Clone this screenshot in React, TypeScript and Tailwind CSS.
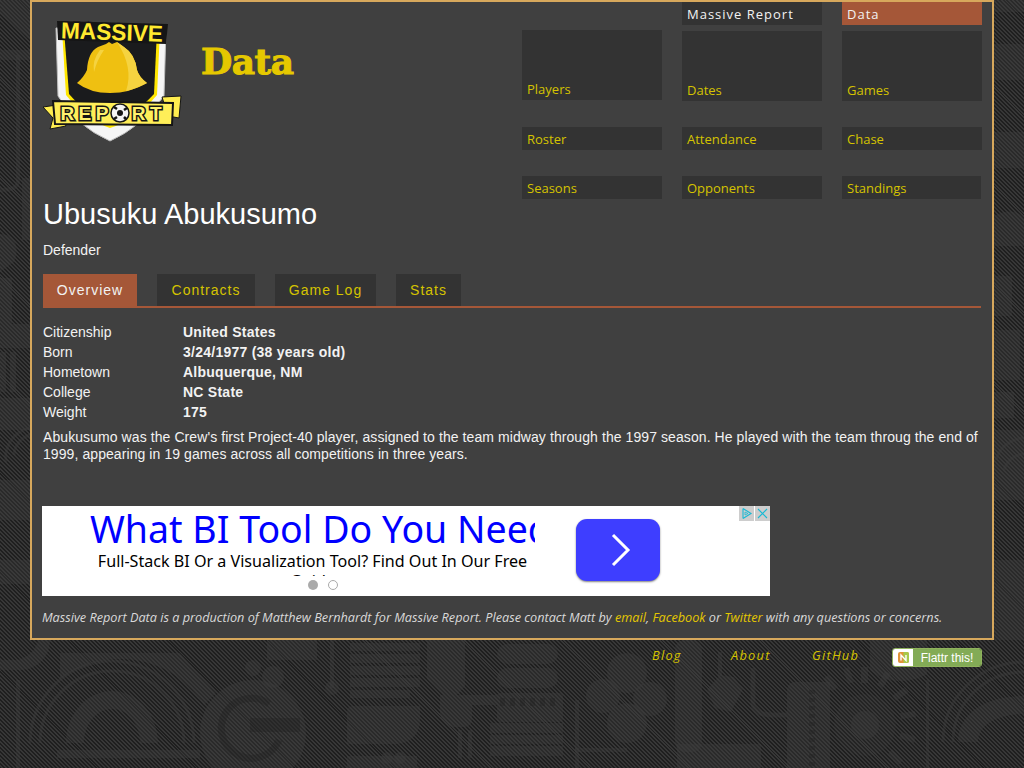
import React from "react";

const navColumns = [
  [
    { label: "Players", box: "h-[70px] mt-[28px]" },
    { label: "Roster", box: "h-[23px] mt-[27px]" },
    { label: "Seasons", box: "h-[23px] mt-[26px]" },
  ],
  [
    { label: "Massive Report", box: "h-[23px] tracking-[1px] text-[#f2f2f2]" },
    { label: "Dates", box: "h-[70px] mt-[6px]" },
    { label: "Attendance", box: "h-[23px] mt-[26px]" },
    { label: "Opponents", box: "h-[23px] mt-[26px]" },
  ],
  [
    { label: "Data", box: "h-[23px] tracking-[1px] text-[#f2f2f2] bg-[#a55738]" },
    { label: "Games", box: "h-[70px] mt-[6px]" },
    { label: "Chase", box: "h-[23px] mt-[26px]" },
    { label: "Standings", box: "h-[23px] mt-[26px] w-[139px]" },
  ],
];

const tabs = [
  { label: "Overview", width: "w-[94px]" },
  { label: "Contracts", width: "w-[98px]" },
  { label: "Game Log", width: "w-[101px]" },
  { label: "Stats", width: "w-[65px]" },
];

const facts = [
  ["Citizenship", "United States"],
  ["Born", "3/24/1977 (38 years old)"],
  ["Hometown", "Albuquerque, NM"],
  ["College", "NC State"],
  ["Weight", "175"],
];

// machinery pattern printed over the stripes
function Backdrop() {
  return (
    <svg className="absolute inset-0 w-[1024px] h-[768px]" viewBox="0 0 1024 768" fill="none">
      <g fill="#3c3c3c" fillOpacity="0.38">
        {/* left margin */}
        <path d="M0 0h30v40L0 14zM0 50h30v10H0zM22 178h8v62h-8zM0 234c16 0 20 14 14 28L0 272zM0 278h12v46H0zM0 324h30v24H0zM0 398h30v32H0zM0 480h30v40H0zM0 560h30v24H0z" />
        <rect x="0" y="352" width="6" height="40" />
        <rect x="10" y="352" width="6" height="40" />
        {/* right margin */}
        <path d="M994 0h30v12h-30zM994 44h30v36h-30zM994 132h30v36h-30zM994 216c14-8 26-4 30 2v28h-30zM994 276h18v40h-18zM994 330h26v50h-26zM994 392h20v26h-20zM994 430h30v70h-30zM994 560h30v80h-30z" />
        {/* bottom left */}
        <path d="M50 640c0 20-16 30-30 30H0v-10h14c10 0 22-8 24-20z" />
        <path d="M60 653h120l36 40-12 12c-20-30-50-46-84-46-20 0-40 6-60 20z" />
        <path d="M66 743c0-28 20-52 46-52s46 24 46 52h-18c0-18-12-34-28-34s-28 16-28 34z" />
        <rect x="16" y="680" width="4" height="88" />
        <rect x="57" y="750" width="143" height="8" />
        <rect x="267" y="640" width="50" height="20" />
        <circle cx="253" cy="668" r="8" />
        <circle cx="332" cy="688" r="7" />
        <rect x="330" y="640" width="4" height="48" />
        <circle cx="253" cy="733" r="53" />
        <circle cx="273" cy="677" r="11" />
        <rect x="350" y="643" width="70" height="8" />
        <rect x="350" y="654" width="70" height="9" />
        <rect x="350" y="666" width="70" height="9" />
        <rect x="350" y="678" width="70" height="9" />
        <rect x="350" y="690" width="60" height="8" />
        <path d="M347 712c0-4 2-6 6-6h67v14c0 16-12 24-26 24h-47z" />
        <rect x="347" y="756" width="70" height="12" />
        {/* bottom middle */}
        <path d="M427 640h38v46l-8 9h-14l-16-16z" />
        <path d="M440 695h57v10h-25v14c0 6-4 8-8 8h-10c-8 0-14-8-14-14z" />
        <rect x="458" y="730" width="4" height="28" />
        <rect x="468" y="730" width="4" height="28" />
        <rect x="497" y="644" width="61" height="20" rx="10" />
        <rect x="497" y="668" width="61" height="20" rx="10" />
        <rect x="497" y="693" width="66" height="29" rx="3" />
        <rect x="490" y="723" width="73" height="10" />
        <rect x="490" y="735" width="73" height="9" />
        <rect x="490" y="746" width="73" height="10" />
        <rect x="575" y="700" width="4" height="68" />
        <rect x="575" y="748" width="52" height="4" />
        <circle cx="627" cy="673" r="20" />
        <circle cx="603" cy="696" r="17" />
        <circle cx="650" cy="699" r="17" />
        <circle cx="627" cy="723" r="20" />
        <circle cx="387" cy="758" r="6" />
        <circle cx="400" cy="758" r="6" />
        {/* bottom right */}
        <rect x="675" y="640" width="27" height="112" rx="9" />
        <rect x="677" y="744" width="84" height="24" />
        <rect x="718" y="652" width="4" height="24" />
        <path d="M707 690l13-15 14 2 9 12-12 23-16-4z" />
        <path d="M787 690c0-5 4-8 8-8h35v86h-43z" />
        <path d="M870 640h57v34c-16 10-42 10-57-4z" />
        <rect x="926" y="680" width="3" height="88" />
        <circle cx="865" cy="725" r="14" />
        <circle cx="865" cy="725" r="31" fillOpacity="0.2" />
        <path d="M861 683h7v-16h-7zM877 685l6 3 8-14-6-3zM892 696l4 5 13-9-4-5zM900 713l1 6 15-2-1-6zM901 732l-2 6 15 5 2-6zM892 749l-4 5 11 11 4-5zM848 684l6-2-5-15-6 2zM833 691l5-4-10-12-5 4z" />
        <path d="M958 742c0-28 26-46 66-46v18c-28 0-46 12-46 28z" />
      </g>
      <g stroke="#3c3c3c" strokeOpacity="0.38">
        <path d="M18 55v125c0 8-6 10-18 10" strokeWidth="4" />
        <path d="M30 743a82 82 0 0 1 164 0" strokeWidth="3" />
        <path d="M40 743a72 72 0 0 1 144 0" strokeWidth="3" />
        <path d="M753 668v35c0 8 8 12 18 12h16" strokeWidth="5" />
        <path d="M943 742c0-44 36-80 81-80" strokeWidth="3" />
        <path d="M953 742c0-38 30-70 71-70" strokeWidth="3" />
        <path d="M996 460a30 30 0 0 1 28-22M1004 470a22 22 0 0 1 20-16" strokeWidth="3" />
        <path d="M14 455a22 22 0 0 1 16-20M6 462a30 30 0 0 1 24-34" strokeWidth="3" />
      </g>
      <g stroke="#1e1e1e" strokeOpacity="0.3">
        <path d="M269 704a30 30 0 1 0 10 36" strokeWidth="7" />
        <path d="M250 725h50" strokeWidth="14" />
        <path d="M500 702h56" strokeWidth="8" strokeDasharray="5 5" />
        <path d="M812 690v76" strokeWidth="6" strokeDasharray="4 4" />
      </g>
    </svg>
  );
}

// drawn in page coordinates, the viewBox starts where the svg sits
function Logo() {
  return (
    <svg width="142" height="132" viewBox="41 12 142 132" className="shrink-0">
      <path d="M56 28 L166 28 L164 96 Q140 128 110 141 Q76 126 58 96 Z" fill="#f5f5f5" stroke="#bdbdbd" />
      <path d="M62 30 L160 30 L157 95 Q136 120 110 128 Q86 120 66 95 Z" fill="#ffe600" />
      <path d="M64 30 L157 30 L154 94 Q134 116 110 123 Q88 116 69 94 Z" fill="#1a1b1d" />
      <path d="M57 21 L168 24 L166 44 L58 40 Z" fill="#151515" />
      <text x="112" y="40" textAnchor="middle" transform="rotate(2 112 32)" className="font-['Liberation_Sans']" fontSize="23" fontWeight="700" fill="#ffe92f" stroke="#151515" strokeWidth="3" paintOrder="stroke" textLength="102" lengthAdjust="spacingAndGlyphs">MASSIVE</text>
      <path d="M77 83 Q84 77 87 70 Q88 52 98 47 L106 44 L109 42 L112 44 L117 42 L124 47 Q135 54 137 70 Q139 77 147 83 Q130 93 110 93 Q90 93 77 83 Z" fill="#efc011" />
      <path d="M117 42 L124 47 Q135 54 137 70 Q139 77 147 83 Q138 88 126 91 Q134 68 117 42 Z" fill="#f5d340" />
      <path d="M100 50 Q92 60 94 72 Q97 60 104 50 Z" fill="#f5d340" />
      <path d="M43 107 L57 105 L66 126 L50 129 L53 118 Z" fill="#ffed4f" stroke="#151515" />
      <path d="M162 97 L181 96 L179 118 L168 116 Z" fill="#ffed4f" stroke="#151515" />
      <path d="M53 101 L173 103 L172 125 L55 124 Z" fill="#ffee58" stroke="#151515" strokeWidth="2" />
      <text x="111" y="120" textAnchor="middle" className="font-['Liberation_Sans']" fontSize="19" fontWeight="700" fill="#fff26e" stroke="#151515" strokeWidth="3" paintOrder="stroke" textLength="101" lengthAdjust="spacing">REPORT</text>
      <circle cx="120" cy="113" r="9" fill="#f4f4f4" stroke="#151515" strokeWidth="1.5" />
      <circle cx="120" cy="113" r="3" fill="#151515" />
      <path d="M114 107l3 2M127 108l-3 2M114 119l3-2M126 119l-2-2" stroke="#151515" strokeWidth="2.5" />
    </svg>
  );
}

function AdChoices() {
  return (
    <div className="absolute top-0 right-0 flex gap-px">
      <div className="w-[15px] h-[15px] bg-[#cdcdcd] flex items-center justify-center">
        <svg width="13" height="13" viewBox="0 0 13 13" fill="none" stroke="#19b9d4" strokeWidth="1.1">
          <path d="M3 1.5v10M3 1.5l8 5-8 5" />
          <path d="M5 5l3 1.5-3 1.5z" strokeWidth="0.8" />
        </svg>
      </div>
      <div className="w-[15px] h-[15px] bg-[#cdcdcd] flex items-center justify-center">
        <svg width="13" height="13" viewBox="0 0 13 13" fill="none" stroke="#19b9d4" strokeWidth="1.1">
          <path d="M2 2l9 9M11 2l-9 9" />
        </svg>
      </div>
    </div>
  );
}

export default function App() {
  return (
    <div className="relative w-[1024px] h-[768px] overflow-hidden bg-[repeating-linear-gradient(45deg,#1f1f1f_0px,#1f1f1f_1.4px,#373737_1.4px,#373737_2.8px)] font-['Liberation_Sans',sans-serif] text-[14px] text-[#f2f2f2]">
      <Backdrop />
      <div className="relative ml-[30px] w-[964px] h-[640px] border-2 border-[#d7a85c] bg-[#404040] pl-[11px] pr-[11px]">
        <div className="flex h-[189px]">
          <div className="mt-[10px] -ml-[2px]">
            <Logo />
          </div>
          <h2 className="ml-[18px] mt-[35px] h-[48px] font-['DejaVu_Serif',serif] text-[36px] leading-[48px] font-bold text-[#e5c800] tracking-[-0.5px] [-webkit-text-stroke:1px_#e5c800]">Data</h2>
          <div className="ml-auto -mr-[1px] flex gap-[20px] font-['Open_Sans',sans-serif] text-[13px]">
            {navColumns.map((col, i) => (
              <div key={i} className="w-[140px]">
                {col.map((item) => (
                  <div key={item.label} className={`flex items-end pl-[5px] pb-[2px] leading-[18px] bg-[#333333] text-[#d5c300] ${item.box}`}>
                    {item.label}
                  </div>
                ))}
              </div>
            ))}
          </div>
        </div>
        <h1 className="text-[29px] leading-[46px] text-white">Ubusuku Abukusumo</h1>
        <p className="mt-[3px] leading-[20px]">Defender</p>
        <div className="mt-[14px] flex gap-[20px] border-b-2 border-[#a55738] tracking-[1px]">
          {tabs.map((tab, i) => (
            <div key={tab.label} className={`h-[32px] text-center leading-[32px] ${tab.width} ${i === 0 ? "bg-[#a55738] text-[#f2f2f2]" : "bg-[#333333] text-[#d5c300]"}`}>
              {tab.label}
            </div>
          ))}
        </div>
        <div className="mt-[14px]">
          {facts.map(([label, value]) => (
            <div key={label} className="flex leading-[20px]">
              <div className="w-[140px]">{label}</div>
              <div className="font-bold tracking-[0.25px]">{value}</div>
            </div>
          ))}
        </div>
        <p className="mt-[7px] leading-[17px] tracking-[0.08px]">
          Abukusumo was the Crew's first Project-40 player, assigned to the team midway through the 1997 season. He played with the team throug the end of 1999, appearing in 19 games across all competitions in three years.
        </p>
        <div className="relative mt-[43px] -ml-[1px] w-[728px] h-[90px] bg-white flex font-['Noto_Sans',sans-serif]">
          <AdChoices />
          <div className="w-[493px] pl-[48px] overflow-hidden">
            <div className="whitespace-nowrap text-[37.5px] leading-[44px] mt-[1px] text-[#0000ff]">What BI Tool Do You Need</div>
            <div className="h-[25px] overflow-hidden text-[16.1px] leading-[20px] text-center text-black w-[445px]">Full-Stack BI Or a Visualization Tool? Find Out In Our Free Guide</div>
          </div>
          <div className="ml-[41px] mt-[13px] w-[84px] h-[62px] rounded-[11px] bg-[#3e3eff] shadow-[0_1px_2px_rgba(0,0,0,0.5)] flex items-center justify-center">
            <svg width="24" height="36" viewBox="0 0 24 36" fill="none" stroke="#fff" strokeWidth="3" className="ml-[6px]">
              <path d="M4 3l15 15L4 33" />
            </svg>
          </div>
          <div className="absolute left-[266px] top-[74px] w-[10px] h-[10px] rounded-full bg-[#aaaaaa]" />
          <div className="absolute left-[286px] top-[74px] w-[10px] h-[10px] rounded-full border border-[#aaaaaa] bg-white" />
        </div>
        <p className="mt-[12px] -ml-[1px] font-['Open_Sans',sans-serif] italic text-[12.7px] leading-[18px] text-[#d9d9d9]">
          Massive Report Data is a production of Matthew Bernhardt for Massive Report. Please contact Matt by <span className="text-[#e5c800]">email</span>, <span className="text-[#e5c800]">Facebook</span> or <span className="text-[#e5c800]">Twitter</span> with any questions or concerns.
        </p>
      </div>
      <div className="relative mt-[7px] ml-[652px] flex items-start font-['Open_Sans',sans-serif] italic text-[12.8px] leading-[16px] tracking-[1.25px] text-[#d5c300]">
        <span className="w-[79px]">Blog</span>
        <span className="w-[81px]">About</span>
        <span className="w-[80px]">GitHub</span>
        <div className="mt-[1px] flex h-[19px] w-[90px] rounded-[3px] border border-[#8fb25c] not-italic tracking-normal overflow-hidden">
          <div className="w-[20px] bg-white flex items-center justify-center">
            <svg width="11" height="11" viewBox="0 0 11 11">
              <rect width="11" height="11" rx="2" fill="#e0953a" />
              <path d="M5.5 0H9a2 2 0 0 1 2 2v7a2 2 0 0 1-2 2H5.5z" fill="#a8c94a" />
              <path d="M3 8.5V3l5 5.5V3" fill="none" stroke="#fff" strokeWidth="1.4" />
            </svg>
          </div>
          <div className="flex-1 bg-[#83ab56] text-center font-['Liberation_Sans',sans-serif] text-[12px] leading-[18px] text-white">Flattr this!</div>
        </div>
      </div>
    </div>
  );
}
